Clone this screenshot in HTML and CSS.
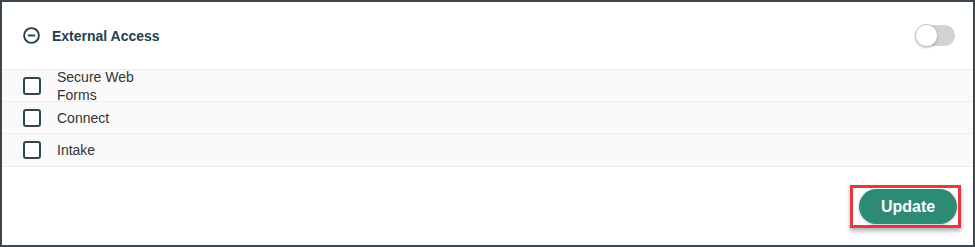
FILE: index.html
```html
<!DOCTYPE html>
<html lang="en">
<head>
    <meta charset="UTF-8">
    <meta name="viewport" content="width=device-width, initial-scale=1.0">
    <title>External Access</title>
    <link rel="stylesheet" href="styles.css">
</head>
<body>

    <div class="panel">
        <div class="section-header">
            <div class="section-title">
                <svg class="collapse-icon" width="17" height="17" viewBox="0 0 17 17">
                    <circle cx="8.5" cy="8.5" r="7.4" fill="none" stroke="#243f4d" stroke-width="1.9"/>
                    <line x1="4.8" y1="8.5" x2="12.2" y2="8.5" stroke="#243f4d" stroke-width="1.9"/>
                </svg>
                <span>External Access</span>
            </div>
            <div class="toggle"><div class="knob"></div></div>
        </div>

        <ul class="access-list">
            <li><span class="checkbox"></span><span class="label">Secure Web Forms</span></li>
            <li><span class="checkbox"></span><span class="label">Connect</span></li>
            <li><span class="checkbox"></span><span class="label">Intake</span></li>
        </ul>

        <div class="panel-footer">
            <div class="highlight">
                <button type="button" class="update-btn">Update</button>
            </div>
        </div>
    </div>

</body>
</html>
```

FILE: styles.css
```css
body {
    margin: 0;
    font-family: Arial, "Liberation Sans", sans-serif;
    background-color: white;
}
.panel {
    width: 975px;
    height: 247px;
    box-sizing: border-box;
    border: 2px solid #3b4750;
    background-color: white;
}
.section-header {
    height: 67px;
    display: flex;
    align-items: center;
    justify-content: space-between;
    padding: 0 18px 0 21px;
}
.section-title {
    display: flex;
    align-items: center;
    gap: 12px;
    font-size: 14px;
    font-weight: bold;
    color: #243f4d;
}
.collapse-icon {
    display: block;
}
.toggle {
    width: 40px;
    height: 21px;
    border-radius: 11px;
    background-color: #d2d2d2;
    position: relative;
}
.toggle .knob {
    position: absolute;
    left: 0;
    top: -1px;
    width: 21px;
    height: 21px;
    border-radius: 50%;
    background-color: white;
    border: 1px solid #c4c4c4;
    box-shadow: 0 1px 2px rgba(0, 0, 0, 0.2);
}
.access-list {
    list-style: none;
    margin: 0;
    padding: 0;
}
.access-list li {
    height: 31px;
    display: flex;
    align-items: center;
    padding-left: 21px;
    background-color: #fafafa;
    border-top: 1px solid #ececec;
}
.access-list li:last-child {
    height: 32px;
    border-bottom: 1px solid #ececec;
}
.checkbox {
    width: 14px;
    height: 14px;
    border: 2px solid #2a4753;
    border-radius: 3px;
    background-color: white;
}
.label {
    margin-left: 16px;
    width: 90px;
    font-size: 14px;
    line-height: 18px;
    color: #333;
}
.panel-footer {
    display: flex;
    justify-content: flex-end;
    padding: 18px 12px 0 0;
}
.highlight {
    border: 3px solid #e6393f;
    padding: 1px 1px 1px 6px;
    box-shadow: 0 3px 4px rgba(0, 0, 0, 0.3);
}
.update-btn {
    display: block;
    width: 98px;
    height: 35px;
    border: none;
    border-radius: 18px;
    background-color: #2d8a75;
    color: white;
    font-family: Arial, "Liberation Sans", sans-serif;
    font-size: 16px;
    font-weight: bold;
    box-shadow: 0 1px 3px rgba(0, 0, 0, 0.25);
}
```
